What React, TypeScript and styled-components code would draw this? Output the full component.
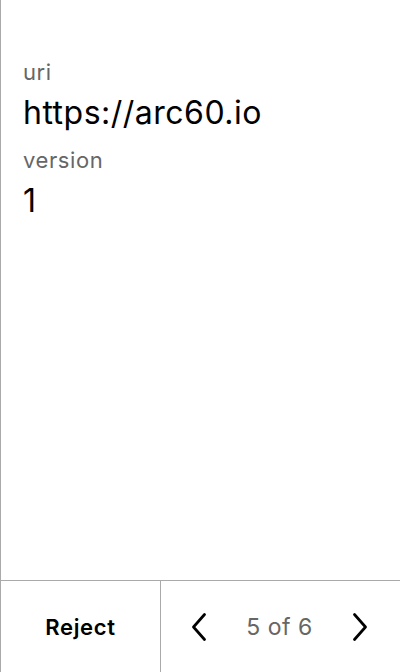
import * as React from 'react';
import styled, { createGlobalStyle } from 'styled-components';

const GlobalStyle = createGlobalStyle`
  html, body {
    margin: 0;
    padding: 0;
    background: #fff;
  }
  body {
    font-family: Inter, "Noto Sans", sans-serif;
  }
`;

const fields = [
  { label: 'uri', value: 'https://arc60.io' },
  { label: 'version', value: '1' },
];

const App = () => {
  return (
    <>
      <GlobalStyle />
      <Screen>
        <Content>
          {fields.map((f) => (
            <Field key={f.label}>
              <Label>{f.label}</Label>
              <Value>{f.value}</Value>
            </Field>
          ))}
        </Content>
        <Footer>
          <RejectButton>Reject</RejectButton>
          <Pager>
            <ArrowButton aria-label="previous">
              <Chevron dir="left" />
            </ArrowButton>
            <PageText>5 of 6</PageText>
            <ArrowButton aria-label="next">
              <Chevron dir="right" />
            </ArrowButton>
          </Pager>
        </Footer>
      </Screen>
    </>
  );
};

export default App;

const Chevron = ({ dir }: { dir: 'left' | 'right' }) => (
  <svg width="14" height="28" viewBox="0 0 14 28" fill="none">
    <path
      d={dir === 'left' ? 'M12.5 1.5 L1.5 14 L12.5 26.5' : 'M1.5 1.5 L12.5 14 L1.5 26.5'}
      stroke="#000"
      strokeWidth="2.7"
      strokeLinecap="round"
      strokeLinejoin="round"
    />
  </svg>
);

const Screen = styled.div`
  height: 672px;
  display: flex;
  flex-direction: column;
  border-left: 1px solid #aaa;
  box-sizing: border-box;
`;

const Content = styled.div`
  flex: 1;
  padding: 57px 22px 0;
  display: flex;
  flex-direction: column;
  gap: 8px;
`;

const Field = styled.div`
  display: flex;
  flex-direction: column;
`;

const Label = styled.div`
  font-size: 22px;
  line-height: 30px;
  letter-spacing: 0.6px;
  color: #666;
`;

const Value = styled.div`
  font-size: 32px;
  line-height: 48px;
  letter-spacing: 0.5px;
  margin-top: 2px;
  color: #000;
`;

const Footer = styled.div`
  height: 92px;
  border-top: 1px solid #aaa;
  display: flex;
  box-sizing: border-box;
`;

const RejectButton = styled.button`
  width: 160px;
  border: none;
  border-right: 1px solid #aaa;
  background: transparent;
  font-family: inherit;
  font-size: 22px;
  font-weight: 600;
  letter-spacing: 0.7px;
  color: #000;
  padding: 0;
`;

const Pager = styled.div`
  flex: 1;
  display: flex;
  align-items: center;
  justify-content: space-between;
  padding: 0 33px 0 31px;
`;

const ArrowButton = styled.button`
  border: none;
  background: transparent;
  padding: 0;
  display: flex;
  align-items: center;
`;

const PageText = styled.span`
  font-size: 23px;
  letter-spacing: 0.5px;
  color: #666;
`;
